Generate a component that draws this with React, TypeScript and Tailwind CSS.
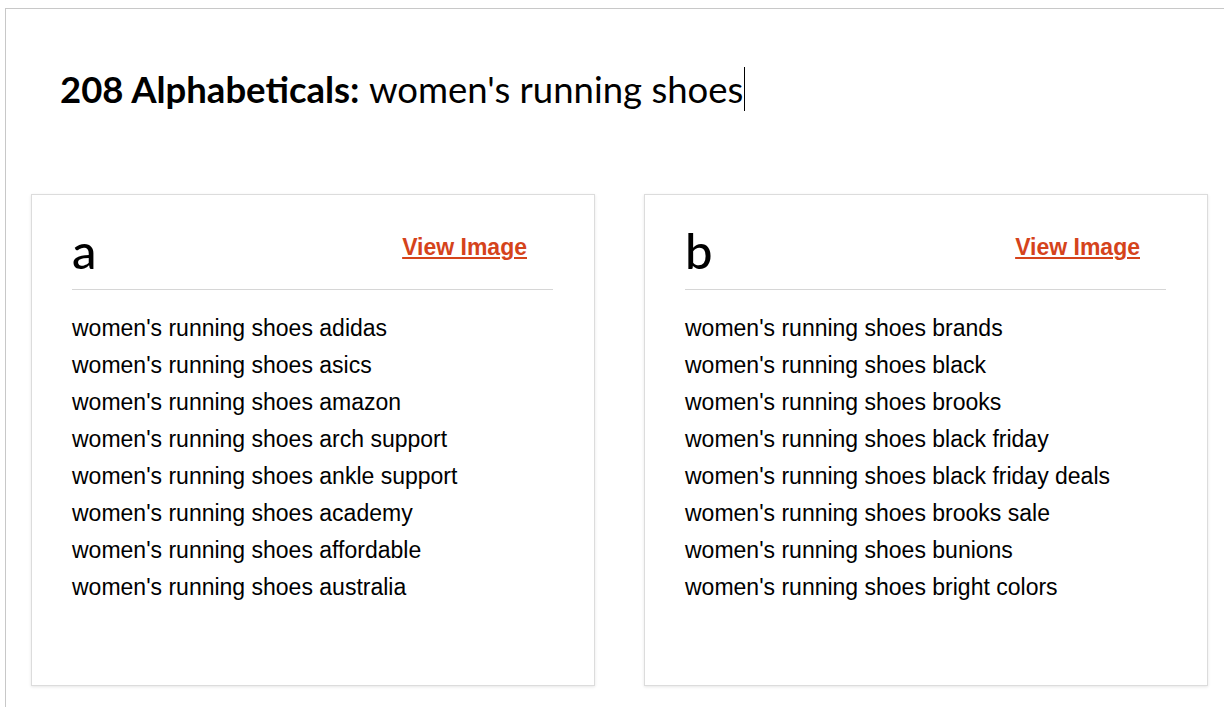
const columns = [
  {
    letter: 'a',
    items: [
      "women's running shoes adidas",
      "women's running shoes asics",
      "women's running shoes amazon",
      "women's running shoes arch support",
      "women's running shoes ankle support",
      "women's running shoes academy",
      "women's running shoes affordable",
      "women's running shoes australia",
    ],
  },
  {
    letter: 'b',
    items: [
      "women's running shoes brands",
      "women's running shoes black",
      "women's running shoes brooks",
      "women's running shoes black friday",
      "women's running shoes black friday deals",
      "women's running shoes brooks sale",
      "women's running shoes bunions",
      "women's running shoes bright colors",
    ],
  },
];

export default function App() {
  return (
    <div className="h-screen bg-white pl-[5px] pt-[8px]">
      <div className="flex h-full flex-col border-l border-t border-[#c8c8c8]">
        <div className="flex h-[158px] items-center pl-[54px] pt-[2px]">
          <h1 className="text-[36.5px] leading-[44px] text-black [font-family:Lato,sans-serif]">
            <span className="font-bold">208 Alphabeticals:</span>{' '}
            <span className="inline-block border-r border-black pr-px">women's running shoes</span>
          </h1>
        </div>

        <div className="mt-[27px] flex gap-[49px] pl-[25px]">
          {columns.map((col) => (
            <section
              key={col.letter}
              className="h-[492px] w-[564px] border border-[#dcdcdc] bg-white pl-[40px] pr-[41px] pt-[31px] shadow-[0_1px_3px_rgba(0,0,0,0.1)]"
            >
              <div className="flex items-start justify-between border-b border-[#d6d6d6] pb-[15px]">
                <span className="text-[49px] font-medium leading-[48px] text-black [font-family:Lato,sans-serif]">
                  {col.letter}
                </span>
                <a
                  href="#"
                  className="mr-[26px] mt-[7px] text-[23px] font-bold leading-[28px] text-[#d5431b] underline [font-family:'Liberation_Sans',Arial,sans-serif]"
                >
                  View Image
                </a>
              </div>
              <ul className="mt-[20px] text-[23px] leading-[37px] text-black [font-family:'Liberation_Sans',Arial,sans-serif]">
                {col.items.map((item) => (
                  <li key={item}>{item}</li>
                ))}
              </ul>
            </section>
          ))}
        </div>
      </div>
    </div>
  );
}
